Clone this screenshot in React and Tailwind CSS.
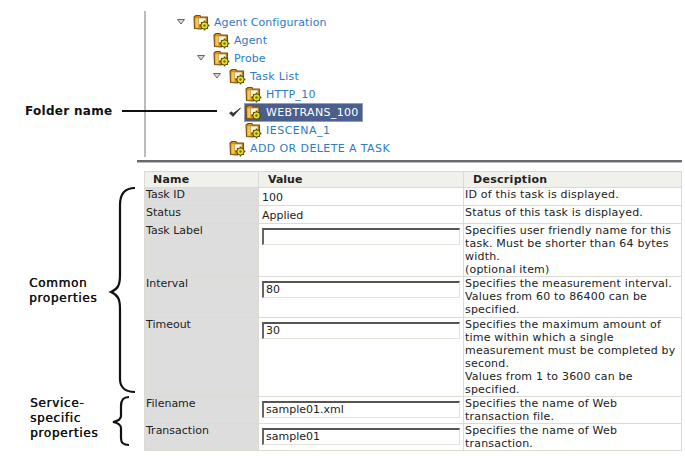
const font = { fontFamily: '"DejaVu Sans", Verdana, sans-serif' };

function FolderIcon() {
  return (
    <svg width="18" height="18" viewBox="0 0 18 18" className="shrink-0">
      <path d="M1 4 L3 2.5 L7 2.5 L8 4 L14.5 4 L14.5 13 L8 16 L1.5 15.5 Z" fill="#d98e1c" stroke="#7a4c0c" strokeWidth="1.1" strokeLinejoin="round" />
      <path d="M5.5 5 L13 5 L13 10 L5.5 12 Z" fill="#fff8e2" stroke="#9a6a18" strokeWidth="0.6" />
      <path d="M2.5 5.5 L5.5 5 L5.5 15 L2.5 14.5 Z" fill="#f7c850" />
      <circle cx="11.5" cy="12.5" r="3.7" fill="#eedc28" stroke="#4f5410" strokeWidth="1" />
      <path d="M11.5 7.6 V9.2 M11.5 15.8 V17.4 M6.6 12.5 H8.2 M14.8 12.5 H16.4 M8.2 9.2 L9.2 10.2 M13.8 14.8 L14.8 15.8 M14.8 9.2 L13.8 10.2 M9.2 14.8 L8.2 15.8" stroke="#4f5410" strokeWidth="1.4" />
      <circle cx="11.5" cy="12.5" r="1.2" fill="#6b7010" />
    </svg>
  );
}

function Toggle() {
  return (
    <svg width="16" height="18" viewBox="0 0 16 18">
      <path d="M0.5 6.5 H7.5 L4 11 Z" fill="#d8d8d8" stroke="#666" strokeWidth="1" />
    </svg>
  );
}

function Check() {
  return (
    <svg width="16" height="18" viewBox="0 0 16 18">
      <path d="M0.5 10 L4 13.5 L11.5 5 L4.2 10.5 L2.5 8.8 Z" fill="#333" stroke="#333" strokeWidth="0.8" strokeLinejoin="round" />
    </svg>
  );
}

function TreeRow({ indent, lead, label, selected, track = "tracking-[0.1px]" }) {
  return (
    <div className={`flex h-[18px] items-center ${indent}`}>
      <span className="w-4 h-[18px] shrink-0">{lead}</span>
      {selected ? (
        <span className="flex items-center h-[17px] bg-[#4a5f8e] text-white pr-[3px] outline outline-1 outline-[#8fa0c0]">
          <FolderIcon />
          <span className={`ml-[3px] ${track}`}>{label}</span>
        </span>
      ) : (
        <>
          <FolderIcon />
          <span className={`ml-[3px] text-[#2c7cc4] ${track}`}>{label}</span>
        </>
      )}
    </div>
  );
}

function Field({ value }) {
  return (
    <div className="h-[17px] w-[198px] border-2 border-t-[#555555] border-l-[#666666] border-r-[#e4e2da] border-b-[#e4e2da] border-r-1 border-b-1 bg-white pl-[2px] text-[11px] leading-[14px] text-[#222]">
      {value}
    </div>
  );
}

const rows = [
  { name: "Task ID", value: "100", desc: "ID of this task is displayed.", h: "h-[18px]" },
  { name: "Status", value: "Applied", desc: "Status of this task is displayed.", h: "h-[18px]" },
  {
    name: "Task Label",
    field: "",
    desc: ["Specifies user friendly name for this", "task. Must be shorter than 64 bytes", "width.", "(optional item)"],
    h: "h-[53px]",
  },
  {
    name: "Interval",
    field: "80",
    desc: ["Specifies the measurement interval.", "Values from 60 to 86400 can be", "specified."],
    h: "h-[41px]",
  },
  {
    name: "Timeout",
    field: "30",
    desc: [
      "Specifies the maximum amount of",
      "time within which a single",
      "measurement must be completed by",
      "second.",
      "Values from 1 to 3600 can be",
      "specified.",
    ],
    h: "h-[79px]",
  },
  { name: "Filename", field: "sample01.xml", desc: ["Specifies the name of Web", "transaction file."], h: "h-[27px]" },
  { name: "Transaction", field: "sample01", desc: ["Specifies the name of Web", "transaction."], h: "h-[27px]" },
];

function Brace({ d, className, width, height }) {
  return (
    <svg width={width} height={height} className={className}>
      <path d={d} fill="none" stroke="#111" strokeWidth="2.2" />
    </svg>
  );
}

export default function App() {
  return (
    <div style={font} className="relative w-[685px] h-[456px] bg-white overflow-hidden text-[11px] leading-[13px] text-[#222]">
      <div className="ml-[144px] mt-[11px] mb-[3px] h-[146px] border-l-2 border-[#bcbcbc] pt-[2px]">
        <TreeRow indent="pl-[31px]" lead={<Toggle />} label="Agent Configuration" />
        <TreeRow indent="pl-[51px]" label="Agent" />
        <TreeRow indent="pl-[51px]" lead={<Toggle />} label="Probe" />
        <TreeRow indent="pl-[67px]" lead={<Toggle />} label="Task List" track="tracking-[0.3px]" />
        <TreeRow indent="pl-[83px]" label="HTTP_10" track="tracking-[0.3px]" />
        <TreeRow indent="pl-[83px]" lead={<Check />} label="WEBTRANS_100" selected track="tracking-[0.35px]" />
        <TreeRow indent="pl-[83px]" label="IESCENA_1" track="tracking-[0.5px]" />
        <TreeRow indent="pl-[67px]" label="ADD OR DELETE A TASK" track="tracking-[0.4px]" />
      </div>

      <div className="ml-[137px] mr-[3px] h-[3px] bg-[#6a6a6a] border-b border-[#bbbbbb]" />

      <table className="ml-[144px] mt-[8px] w-[537px] table-fixed border-collapse border-r border-b border-[#8c8c8c]">
        <colgroup>
          <col className="w-[114px]" />
          <col className="w-[205px]" />
          <col className="w-[218px]" />
        </colgroup>
        <thead>
          <tr className="h-[16px] bg-[#f1f1ec] font-bold text-[#222]">
            <th className="border border-[#dcdad2] text-left pl-[8px] font-bold tracking-[0.2px]">Name</th>
            <th className="border border-[#dcdad2] text-left pl-[9px] font-bold">Value</th>
            <th className="border border-[#dcdad2] text-left pl-[9px] font-bold tracking-[0.3px]">Description</th>
          </tr>
        </thead>
        <tbody>
          {rows.map((r) => (
            <tr key={r.name} className={r.h}>
              <td className="border border-[#dcdad2] bg-[#dddddd] align-top pl-[1px] pt-[1px] leading-[12px]">{r.name}</td>
              <td className={`border border-[#dcdad2] align-top pl-[3px] ${r.field !== undefined ? "pt-[4px]" : "pt-[3px]"}`}>
                {r.field !== undefined ? <Field value={r.field} /> : r.value}
              </td>
              <td className="border border-[#dcdad2] align-top pl-[1px] whitespace-nowrap tracking-[0.2px]">
                {Array.isArray(r.desc) ? r.desc.map((line) => <div key={line}>{line}</div>) : r.desc}
              </td>
            </tr>
          ))}
        </tbody>
      </table>

      {/* callouts sitting over the screenshot */}
      <span className="absolute left-[25px] top-[104px] text-[12px] leading-[14px] font-bold tracking-[0.3px] text-[#111]">Folder name</span>
      <div className="absolute left-[122px] top-[110px] w-[95px] h-[2px] bg-[#111]" />
      <Brace
        className="absolute left-[105px] top-[185px]"
        width={34}
        height={210}
        d="M30 3 C20 3 15 8 15 20 L15 90 C15 100 13 104 6 107 C13 110 15 114 15 124 L15 194 C15 202 20 207 30 207"
      />
      <div className="absolute left-[29px] top-[276px] text-[12px] leading-[15px] tracking-[0.7px] text-[#111] [text-shadow:0.4px_0_0_#111]">
        <div>Common</div>
        <div>properties</div>
      </div>
      <Brace
        className="absolute left-[108px] top-[395px]"
        width={24}
        height={52}
        d="M21 2 C15 2 13 5 13 11 L13 21 C13 24 10 26 5 27 C10 28 13 30 13 33 L13 43 C13 48 15 50 21 50"
      />
      <div className="absolute left-[30px] top-[396px] text-[12px] leading-[15px] tracking-[0.7px] text-[#111] [text-shadow:0.4px_0_0_#111]">
        <div>Service-</div>
        <div>specific</div>
        <div>properties</div>
      </div>
    </div>
  );
}
